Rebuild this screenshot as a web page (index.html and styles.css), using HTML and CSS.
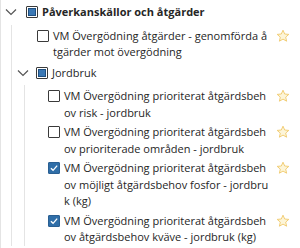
FILE: index.html
```html
<!DOCTYPE html>
<html lang="sv">
<head>
<meta charset="utf-8">
<link rel="stylesheet" href="styles.css">
</head>
<body>
<div class="tree">
  <div class="node">
    <div class="row node-row top">
      <svg class="chev" viewBox="0 0 12 12" width="12" height="12"><path d="M1 3.5 L6 8.5 L11 3.5" fill="none" stroke="#555" stroke-width="1.2"/></svg>
      <span class="cb partial"><span class="inner"></span></span>
      <span class="label bold">Påverkanskällor och åtgärder</span>
    </div>
    <div class="children lvl1">
      <div class="row leaf l1">
        <span class="cb"></span>
        <span class="label">VM Övergödning åtgärder - genomförda åtgärder mot övergödning</span>
        <svg class="star" viewBox="0 0 14 14" width="14" height="14"><path d="M7 1.2 L8.7 5 L12.8 5.4 L9.7 8.1 L10.6 12.2 L7 10.1 L3.4 12.2 L4.3 8.1 L1.2 5.4 L5.3 5 Z" fill="#fdf5d8" stroke="#efc86a" stroke-width="0.9" stroke-linejoin="round"/></svg>
      </div>
      <div class="node">
        <div class="row node-row sub">
          <svg class="chev" viewBox="0 0 12 12" width="12" height="12"><path d="M1 3.5 L6 8.5 L11 3.5" fill="none" stroke="#555" stroke-width="1.2"/></svg>
          <span class="cb partial"><span class="inner"></span></span>
          <span class="label">Jordbruk</span>
        </div>
        <div class="children lvl2">
          <div class="row leaf l2">
            <span class="cb"></span>
            <span class="label">VM Övergödning prioriterat åtgärdsbehov risk - jordbruk</span>
            <svg class="star" viewBox="0 0 14 14" width="14" height="14"><path d="M7 1.2 L8.7 5 L12.8 5.4 L9.7 8.1 L10.6 12.2 L7 10.1 L3.4 12.2 L4.3 8.1 L1.2 5.4 L5.3 5 Z" fill="#fdf5d8" stroke="#efc86a" stroke-width="0.9" stroke-linejoin="round"/></svg>
          </div>
          <div class="row leaf l2">
            <span class="cb"></span>
            <span class="label">VM Övergödning prioriterat åtgärdsbehov prioriterade områden - jordbruk</span>
            <svg class="star" viewBox="0 0 14 14" width="14" height="14"><path d="M7 1.2 L8.7 5 L12.8 5.4 L9.7 8.1 L10.6 12.2 L7 10.1 L3.4 12.2 L4.3 8.1 L1.2 5.4 L5.3 5 Z" fill="#fdf5d8" stroke="#efc86a" stroke-width="0.9" stroke-linejoin="round"/></svg>
          </div>
          <div class="row leaf l2">
            <span class="cb checked"><svg viewBox="0 0 12 12" width="12" height="12"><path d="M2.3 6.2 L4.9 8.8 L9.8 3.2" fill="none" stroke="#fff" stroke-width="1.6"/></svg></span>
            <span class="label">VM Övergödning prioriterat åtgärdsbehov möjligt åtgärdsbehov fosfor - jordbruk (kg)</span>
            <svg class="star" viewBox="0 0 14 14" width="14" height="14"><path d="M7 1.2 L8.7 5 L12.8 5.4 L9.7 8.1 L10.6 12.2 L7 10.1 L3.4 12.2 L4.3 8.1 L1.2 5.4 L5.3 5 Z" fill="#fdf5d8" stroke="#efc86a" stroke-width="0.9" stroke-linejoin="round"/></svg>
          </div>
          <div class="row leaf l2">
            <span class="cb checked"><svg viewBox="0 0 12 12" width="12" height="12"><path d="M2.3 6.2 L4.9 8.8 L9.8 3.2" fill="none" stroke="#fff" stroke-width="1.6"/></svg></span>
            <span class="label">VM Övergödning prioriterat åtgärdsbehov åtgärdsbehov kväve - jordbruk (kg)</span>
            <svg class="star" viewBox="0 0 14 14" width="14" height="14"><path d="M7 1.2 L8.7 5 L12.8 5.4 L9.7 8.1 L10.6 12.2 L7 10.1 L3.4 12.2 L4.3 8.1 L1.2 5.4 L5.3 5 Z" fill="#fdf5d8" stroke="#efc86a" stroke-width="0.9" stroke-linejoin="round"/></svg>
          </div>
        </div>
      </div>
    </div>
  </div>
</div>
</body>
</html>
```
FILE: styles.css
```css
html, body {
  margin: 0;
  padding: 0;
  background: #fff;
}
body {
  width: 300px;
  height: 248px;
  overflow: hidden;
  font-family: "Open Sans", "Liberation Sans", sans-serif;
  font-size: 11px;
  line-height: 16.5px;
  color: #262626;
}
.tree {
  border-left: 1px solid #e4e4e4;
  min-height: 248px;
  box-sizing: border-box;
}
.row {
  display: flex;
  align-items: flex-start;
}
.node-row {
  padding: 4px 0 4px;
}
.leaf {
  padding: 3px 0 0;
}
.row.top {
  padding-left: 4px;
}
.row.sub {
  padding-left: 5px;
}
.chev {
  flex: none;
  margin-top: 2px;
}
.top .chev { margin-right: 9px; }
.sub .chev { margin-right: 7px; }
.cb {
  flex: none;
  width: 12px;
  height: 12px;
  box-sizing: border-box;
  border: 1px solid #3a3a3a;
  border-radius: 1px;
  background: #fff;
  margin-top: 2px;
  margin-right: 4px;
  display: flex;
  align-items: center;
  justify-content: center;
}
.cb .inner {
  width: 8px;
  height: 8px;
  box-sizing: border-box;
  background: #3a78b5;
  border: 1px solid #1f4f80;
}
.cb.checked {
  background: #2f6ea8;
  border-color: #2a5f92;
}
.cb.checked svg {
  display: block;
}
.label {
  flex: 1;
  min-width: 0;
  word-break: break-all;
}
.bold {
  font-weight: 700;
}
.star {
  flex: none;
  margin: 1px 10px 0 6px;
}
.children.lvl1 {
  margin-left: 10px;
  border-left: 1px solid #e4e4e4;
}
.row.l1 {
  padding-left: 25px;
}
.children.lvl2 {
  margin-left: 12px;
  border-left: 1px solid #e4e4e4;
}
.row.l2 {
  padding-left: 23px;
}
```
